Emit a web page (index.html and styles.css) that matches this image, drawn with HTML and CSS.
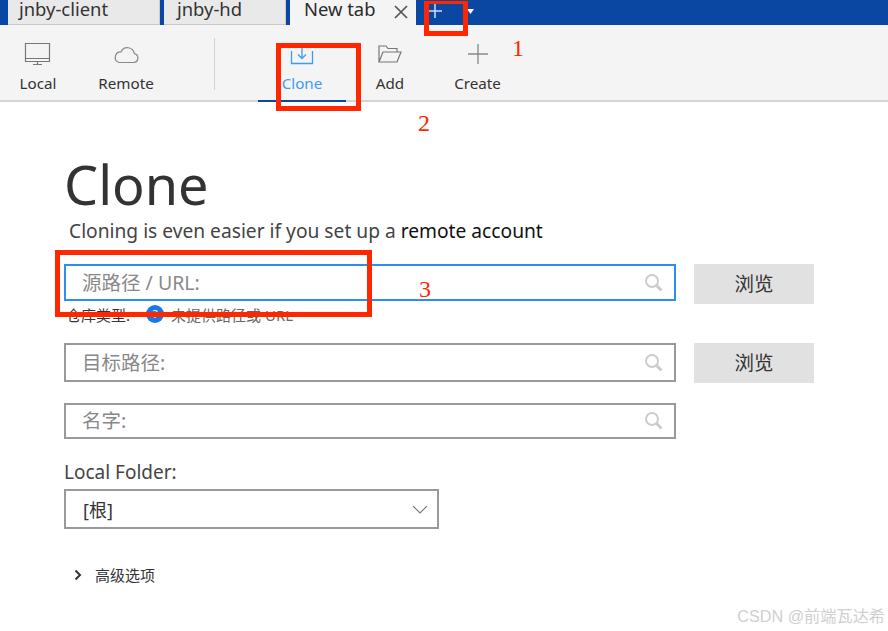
FILE: index.html
```html
<!DOCTYPE html>
<html lang="zh">
<head>
<meta charset="utf-8">
<title>Clone</title>
<link rel="stylesheet" href="styles.css">
</head>
<body>
<header class="tabbar">
  <div class="tab tab-a"><span>jnby-client</span></div>
  <div class="tab tab-b"><span>jnby-hd</span></div>
  <div class="tab tab-active"><span>New tab</span>
    <svg class="tab-close" width="16" height="16" viewBox="0 0 16 16"><path d="M2 2l12 12M14 2L2 14" stroke="#555" stroke-width="1.7" fill="none"/></svg>
  </div>
  <svg class="tab-plus" width="14" height="14" viewBox="0 0 14 14"><path d="M7 0v14M0 7h14" stroke="#cfdcf0" stroke-width="1.5" fill="none"/></svg>
  <svg class="tab-caret" width="7" height="5" viewBox="0 0 7 5"><path d="M0 0h7L3.500 5z" fill="#fff"/></svg>
</header>
<nav class="toolbar">
  <div class="tool tool-local">
    <svg width="28" height="24" viewBox="0 0 28 24"><path d="M1.500 1.500h24v18h-24zM1.500 16.500h24M9 22.500h9M13.500 20v2" stroke="#777" stroke-width="1.200" fill="none"/></svg>
    <span>Local</span>
  </div>
  <div class="tool tool-remote">
    <svg width="26" height="22" viewBox="0 0 26 22"><path d="M6 19.500h14.500a4.500 4.500 0 0 0 .8-8.900 7 7 0 0 0-13.300-1.800A5.500 5.500 0 0 0 6 19.500z" stroke="#888" stroke-width="1.200" fill="none"/></svg>
    <span>Remote</span>
  </div>
  <div class="tool-sep"></div>
  <div class="tool tool-clone">
    <svg width="24" height="22" viewBox="0 0 24 22"><path d="M1.500 8v12.500h21V8M12 4v11M8 11.500l4 4 4-4" stroke="#3d9bf5" stroke-width="1.300" fill="none"/></svg>
    <span>Clone</span>
  </div>
  <div class="tool tool-add">
    <svg width="26" height="20" viewBox="0 0 26 20"><path d="M2 18V2h7l2 2.500h9V8M2 18l4-10h18l-4 10z" stroke="#777" stroke-width="1.200" fill="none"/></svg>
    <span>Add</span>
  </div>
  <div class="tool tool-create">
    <svg width="20" height="20" viewBox="0 0 20 20"><path d="M10 0v20M0 10h20" stroke="#888" stroke-width="1.300" fill="none"/></svg>
    <span>Create</span>
  </div>
</nav>
<main class="content">
  <h1 class="title">Clone</h1>
  <p class="subtitle">Cloning is even easier if you set up a <b class="link">remote account</b></p>
  <div class="row row-source">
    <div class="field field-focus"><span class="ph">源路径 / URL:</span>
      <svg class="search" width="20" height="20" viewBox="0 0 20 20"><circle cx="8" cy="8" r="6" stroke="#ccc" stroke-width="2" fill="none"/><path d="M12.500 12.500l5 5" stroke="#ccc" stroke-width="3" fill="none"/></svg>
    </div>
    <button class="browse">浏览</button>
  </div>
  <div class="repo-type">
    <span>仓库类型:</span><span class="repo-dot">?</span><span class="repo-msg">未提供路径或 URL</span>
  </div>
  <div class="row row-target">
    <div class="field"><span class="ph">目标路径:</span>
      <svg class="search" width="20" height="20" viewBox="0 0 20 20"><circle cx="8" cy="8" r="6" stroke="#ccc" stroke-width="2" fill="none"/><path d="M12.500 12.500l5 5" stroke="#ccc" stroke-width="3" fill="none"/></svg>
    </div>
    <button class="browse">浏览</button>
  </div>
  <div class="row row-name">
    <div class="field field-name"><span class="ph">名字:</span>
      <svg class="search" width="20" height="20" viewBox="0 0 20 20"><circle cx="8" cy="8" r="6" stroke="#ccc" stroke-width="2" fill="none"/><path d="M12.500 12.500l5 5" stroke="#ccc" stroke-width="3" fill="none"/></svg>
    </div>
  </div>
  <label class="folder-label">Local Folder:</label>
  <div class="select"><span>[根]</span>
    <svg width="16" height="9" viewBox="0 0 16 9"><path d="M1 1l7 7 7-7" stroke="#777" stroke-width="1.100" fill="none"/></svg>
  </div>
  <div class="advanced">
    <svg width="8" height="12" viewBox="0 0 8 12"><path d="M1.500 1.500L6 6l-4.500 4.500" stroke="#333" stroke-width="2" fill="none"/></svg>
    <span>高级选项</span>
  </div>
</main>
<div class="mark mark-1"></div>
<div class="mark mark-2"></div>
<div class="mark mark-3"></div>
<span class="num num-1">1</span>
<span class="num num-2">2</span>
<span class="num num-3">3</span>
<span class="watermark">CSDN @前端瓦达希</span>
</body>
</html>
```
FILE: styles.css
```css
* { box-sizing: border-box; }
html, body { margin: 0; height: 100%; }
body {
  position: relative;
  width: 888px;
  height: 631px;
  overflow: hidden;
  background: #fff;
  color: #333;
  font-family: "Noto Sans", "Open Sans", "Noto Sans CJK SC", sans-serif;
}
.tabbar {
  display: flex;
  align-items: stretch;
  height: 25px;
  background: #0a47a3;
  padding-left: 8px;
}
.tab {
  display: flex;
  font-size: 18.400px;
  color: #333;
  line-height: 18px;
  background: #e9e9e9;
  border-right: 1px solid #ccc;
  border-bottom: 1px solid #c8c8c8;
  padding-left: 11px;
}
.tab-a { width: 152px; margin-right: 4px; }
.tab-b { width: 122px; margin-right: 4px; padding-left: 13px; }
.tab-active {
  width: 126px;
  background: #f4f4f4;
  border: 0;
  padding-left: 14px;
  position: relative;
  color: #2b2b2b;
}
.tab-close { margin-left: 18px; margin-top: 4px; }
.tab-plus { margin-left: 12px; margin-top: 4px; }
.tab-caret { margin-left: 25px; margin-top: 9px; }
.toolbar {
  display: flex;
  height: 77px;
  background: #f4f4f4;
  border-bottom: 2px solid #d4d4d4;
  position: relative;
}
.tool {
  display: flex;
  flex-direction: column;
  align-items: center;
  font-size: 15.200px;
  color: #333;
  height: 75px;
  padding-top: 17px;
}
.tool svg { height: 24px; flex: none; }
.tool span { margin-top: 7px; line-height: 20px; }
.tool-local { width: 76px; }
.tool-remote { width: 100px; margin-left: 0; }
.tool-sep { width: 1px; height: 52px; margin: 13px 0 0 38px; background: #d2d2d2; }
.tool-clone {
  width: 88px;
  margin-left: 43px;
  color: #3d9bf5;
  border-bottom: 2px solid #0a47a3;
  height: 77px;
}
.tool-add { width: 88px; }
.tool-create { width: 87px; }
.content { padding: 0 0 0 64px; }
.title {
  margin: 50px 0 0;
  font-size: 54px;
  font-weight: 400;
  line-height: 64px;
  color: #333;
}
.subtitle {
  margin: 2px 0 0 5px;
  font-size: 19.200px;
  line-height: 26px;
  color: #444;
}
.link { font-weight: 400; color: #111; }
.row { display: flex; gap: 18px; }
.row-source { margin-top: 20px; }
.row-target { margin-top: 19px; }
.row-name { margin-top: 20px; }
.field {
  width: 612px;
  height: 39px;
  border: 2px solid #999;
  display: flex;
  align-items: center;
  justify-content: space-between;
  padding: 0 10px 0 16px;
}
.field-focus { height: 37px; border-color: #2a8ff5; }
.field-name { height: 36px; }
.ph { font-size: 19.500px; color: #888; margin-top: -3px; }
.browse {
  width: 120px;
  height: 40px;
  border: 0;
  background: #e1e1e1;
  color: #333;
  font-family: inherit;
  font-size: 19.500px;
  padding: 0 0 3px;
}
.repo-type {
  display: flex;
  align-items: center;
  height: 20px;
  margin-left: 2px;
  font-size: 15px;
  color: #333;
}
.repo-dot {
  width: 18px;
  height: 18px;
  margin: 0 7px 0 16px;
  border-radius: 50%;
  background: #1a78e6;
  color: #fff;
  font-size: 11px;
  text-align: center;
  line-height: 18px;
  flex: none;
}
.repo-msg { color: #666; }
.folder-label {
  display: block;
  margin-top: 20px;
  font-size: 19px;
  line-height: 26px;
  color: #444;
}
.select {
  width: 375px;
  height: 40px;
  margin-top: 4px;
  border: 2px solid #999;
  display: flex;
  align-items: center;
  justify-content: space-between;
  padding: 0 9px 0 17px;
  font-size: 18px;
  color: #333;
}
.advanced {
  display: flex;
  align-items: center;
  gap: 13px;
  margin: 36px 0 0 10px;
  font-size: 15px;
  line-height: 20px;
  color: #333;
}
.mark {
  position: absolute;
  border: 5px solid #ff2600;
}
.mark-1 { left: 424px; top: 1px; width: 44px; height: 35px; border-top-width: 3px; }
.mark-2 { left: 276px; top: 43px; width: 85px; height: 68px; }
.mark-3 { left: 55px; top: 250px; width: 317px; height: 67px; }
.num {
  position: absolute;
  font-family: "Liberation Serif", serif;
  font-size: 24px;
  line-height: 28px;
  color: #ff2600;
}
.num-1 { left: 512px; top: 34px; }
.num-2 { left: 418px; top: 109px; }
.num-3 { left: 419px; top: 275px; }
.watermark {
  position: absolute;
  right: 3px;
  bottom: 5px;
  font-family: "Liberation Sans", "Noto Sans CJK SC", sans-serif;
  font-size: 16.200px;
  line-height: 20px;
  color: #cfcfcf;
}
```
